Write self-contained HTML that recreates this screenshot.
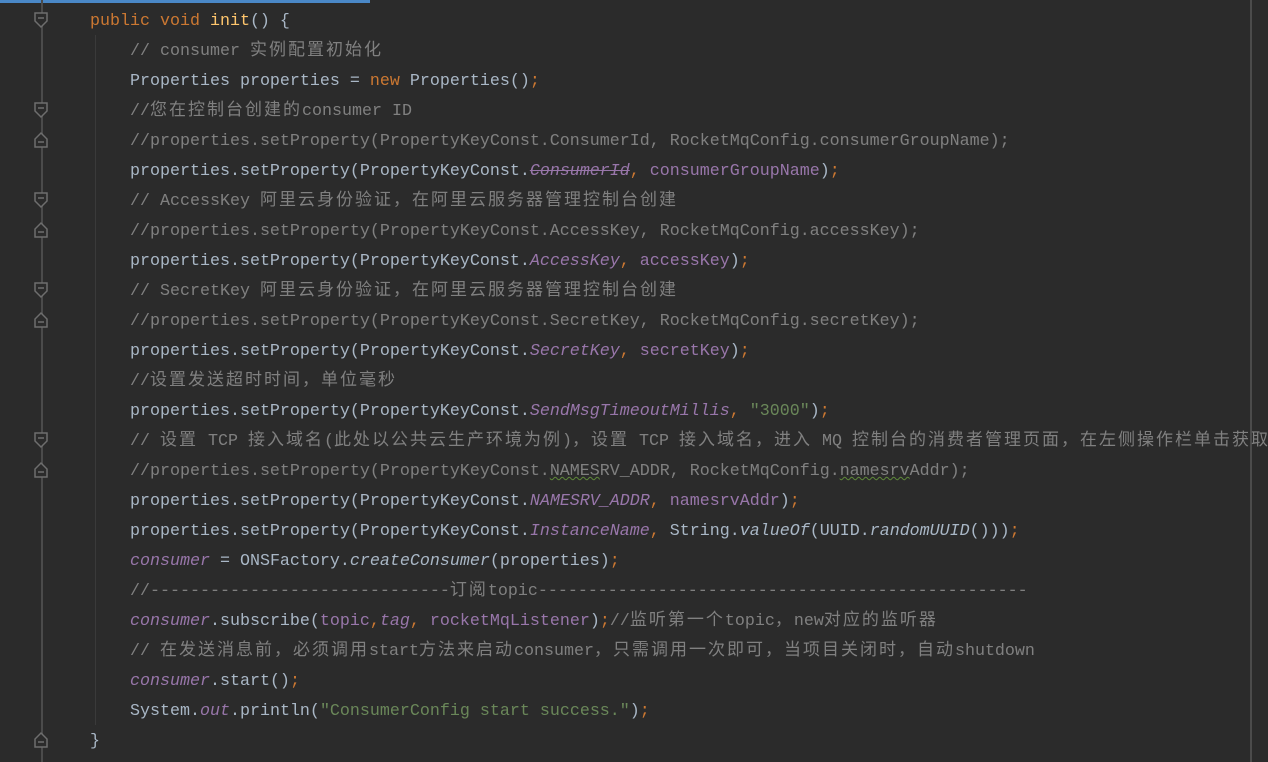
<!DOCTYPE html>
<html><head><meta charset="utf-8"><style>
body{margin:0;width:1268px;height:762px;background:#2b2b2b;overflow:hidden;position:relative;font-family:"Liberation Mono",monospace;font-size:16.67px;color:#a9b7c6}
.l{position:absolute;left:0;height:30px;line-height:30px;white-space:pre;margin-top:2px}
.c{color:#808080}
.k{color:#cc7832}
.m{color:#ffc66d}
.f{color:#9876aa;font-style:italic}
.i{font-style:italic}
.s{color:#6a8759}
.z{font-family:"Noto Sans CJK SC",sans-serif;font-size:17px;letter-spacing:2px;line-height:1;vertical-align:baseline}
.w{text-decoration:underline wavy #5f8a3a;text-decoration-thickness:1px}
</style></head><body>
<div style="position:absolute;left:0;top:0;width:370px;height:3px;background:#4a88c7"></div>
<div style="position:absolute;left:41px;top:0;width:2px;height:762px;background:#4b4b4b"></div>
<div style="position:absolute;left:95px;top:35px;width:1px;height:690px;background:#3a3a3a"></div>
<div style="position:absolute;left:1250px;top:0;width:2px;height:762px;background:#4b4b4b"></div>

<svg style="position:absolute;left:0;top:0" width="60" height="762">
<g fill="#2b2b2b" stroke="#6e6e6e" stroke-width="1.5">
<path d="M35 13h12v8l-6 6l-6-6z"/><path d="M38 18h6"/>
<path d="M35 103h12v8l-6 6l-6-6z"/><path d="M38 108h6"/>
<path d="M35 193h12v8l-6 6l-6-6z"/><path d="M38 198h6"/>
<path d="M35 283h12v8l-6 6l-6-6z"/><path d="M38 288h6"/>
<path d="M35 433h12v8l-6 6l-6-6z"/><path d="M38 438h6"/>
<path d="M35 147h12v-8l-6-6l-6 6z"/><path d="M38 142h6"/>
<path d="M35 237h12v-8l-6-6l-6 6z"/><path d="M38 232h6"/>
<path d="M35 327h12v-8l-6-6l-6 6z"/><path d="M38 322h6"/>
<path d="M35 477h12v-8l-6-6l-6 6z"/><path d="M38 472h6"/>
<path d="M35 747h12v-8l-6-6l-6 6z"/><path d="M38 742h6"/>
</g></svg>

<div class="l" style="top:5px;left:90px"><span class="k">public void </span><span class="m">init</span>() {</div>
<div class="l c" style="top:35px;left:130px">// consumer <span class="z">实例配置初始化</span></div>
<div class="l" style="top:65px;left:130px">Properties properties = <span class="k">new </span>Properties()<span class="k">;</span></div>
<div class="l c" style="top:95px;left:130px">//<span class="z">您在控制台创建的</span>consumer ID</div>
<div class="l c" style="top:125px;left:130px">//properties.setProperty(PropertyKeyConst.ConsumerId, RocketMqConfig.consumerGroupName);</div>
<div class="l" style="top:155px;left:130px">properties.setProperty(PropertyKeyConst.<span class="f" style="text-decoration:line-through">ConsumerId</span><span class="k">, </span><span style="color:#9876aa">consumerGroupName</span>)<span class="k">;</span></div>
<div class="l c" style="top:185px;left:130px">// AccessKey <span class="z">阿里云身份验证，在阿里云服务器管理控制台创建</span></div>
<div class="l c" style="top:215px;left:130px">//properties.setProperty(PropertyKeyConst.AccessKey, RocketMqConfig.accessKey);</div>
<div class="l" style="top:245px;left:130px">properties.setProperty(PropertyKeyConst.<span class="f">AccessKey</span><span class="k">, </span><span style="color:#9876aa">accessKey</span>)<span class="k">;</span></div>
<div class="l c" style="top:275px;left:130px">// SecretKey <span class="z">阿里云身份验证，在阿里云服务器管理控制台创建</span></div>
<div class="l c" style="top:305px;left:130px">//properties.setProperty(PropertyKeyConst.SecretKey, RocketMqConfig.secretKey);</div>
<div class="l" style="top:335px;left:130px">properties.setProperty(PropertyKeyConst.<span class="f">SecretKey</span><span class="k">, </span><span style="color:#9876aa">secretKey</span>)<span class="k">;</span></div>
<div class="l c" style="top:365px;left:130px">//<span class="z">设置发送超时时间，单位毫秒</span></div>
<div class="l" style="top:395px;left:130px">properties.setProperty(PropertyKeyConst.<span class="f">SendMsgTimeoutMillis</span><span class="k">, </span><span class="s">"3000"</span>)<span class="k">;</span></div>
<div class="l c" style="top:425px;left:130px">// <span class="z">设置</span> TCP <span class="z">接入域名</span>(<span class="z">此处以公共云生产环境为例</span>)<span class="z">，设置</span> TCP <span class="z">接入域名，进入</span> MQ <span class="z">控制台的消费者管理页面，在左侧操作栏单击获取</span></div>
<div class="l c" style="top:455px;left:130px">//properties.setProperty(PropertyKeyConst.<span class="w">NAMES</span>RV_ADDR, RocketMqConfig.<span class="w">namesrv</span>Addr);</div>
<div class="l" style="top:485px;left:130px">properties.setProperty(PropertyKeyConst.<span class="f">NAMESRV_ADDR</span><span class="k">, </span><span style="color:#9876aa">namesrvAddr</span>)<span class="k">;</span></div>
<div class="l" style="top:515px;left:130px">properties.setProperty(PropertyKeyConst.<span class="f">InstanceName</span><span class="k">, </span>String.<span class="i">valueOf</span>(UUID.<span class="i">randomUUID</span>()))<span class="k">;</span></div>
<div class="l" style="top:545px;left:130px"><span class="f">consumer</span> = ONSFactory.<span class="i">createConsumer</span>(properties)<span class="k">;</span></div>
<div class="l c" style="top:575px;left:130px">//------------------------------<span class="z">订阅</span>topic-------------------------------------------------</div>
<div class="l" style="top:605px;left:130px"><span class="f">consumer</span>.subscribe(<span style="color:#9876aa">topic</span><span class="k">,</span><span class="f">tag</span><span class="k">, </span><span style="color:#9876aa">rocketMqListener</span>)<span class="k">;</span><span class="c">//<span class="z">监听第一个</span>topic<span class="z">，</span>new<span class="z">对应的监听器</span></span></div>
<div class="l c" style="top:635px;left:130px">// <span class="z">在发送消息前，必须调用</span>start<span class="z">方法来启动</span>consumer<span class="z">，只需调用一次即可，当项目关闭时，自动</span>shutdown</div>
<div class="l" style="top:665px;left:130px"><span class="f">consumer</span>.start()<span class="k">;</span></div>
<div class="l" style="top:695px;left:130px">System.<span class="f">out</span>.println(<span class="s">"ConsumerConfig start success."</span>)<span class="k">;</span></div>
<div class="l" style="top:725px;left:90px">}</div>
</body></html>
